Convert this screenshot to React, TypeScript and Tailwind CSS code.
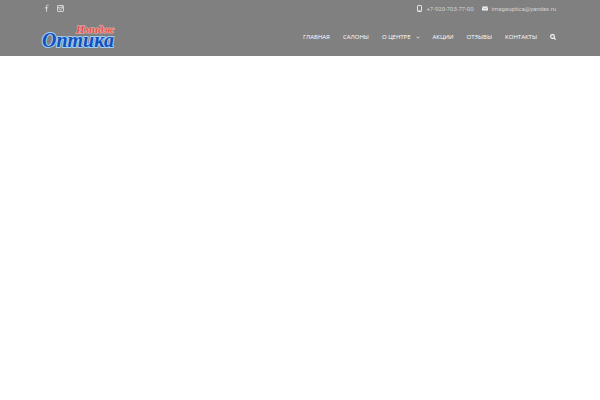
import React from "react";

const links = ["ГЛАВНАЯ", "САЛОНЫ", "О ЦЕНТРЕ", "АКЦИИ", "ОТЗЫВЫ", "КОНТАКТЫ"];

function Logo() {
  return (
    <a href="#" aria-label="Имидж Оптика" className="block">
      <svg width="74" height="28" viewBox="0 0 74 28" className="block overflow-visible">
        <g strokeLinejoin="round" paintOrder="stroke">
          <text x="34" y="11" fill="#e4534e" stroke="#f0b9b7" strokeWidth="1" className="font-['Liberation_Serif',serif] text-[11px] font-bold italic">
            Имидж
          </text>
          <text x="0" y="25" fill="#1450bd" stroke="#a3d0f2" strokeWidth="2" className="font-['Liberation_Serif',serif] text-[20px] font-bold italic">
            Оптика
          </text>
        </g>
      </svg>
    </a>
  );
}

export default function App() {
  return (
    <div className="min-h-screen bg-white font-['Open_Sans',sans-serif]">
      <header className="h-14 bg-[#808080] pr-11 pl-[42px] text-white">
        <div className="flex h-4 items-center justify-between text-[#d2d2d2]">
          <div className="flex items-center gap-2 px-0.5">
            <a href="#" aria-label="Facebook">
              <svg width="5" height="8" viewBox="0 0 5 8" fill="none" stroke="currentColor">
                <path d="M4.6 1H3.8Q2.5 1 2.5 2.2V7.8M.8 3.8H4.3" />
              </svg>
            </a>
            <a href="#" aria-label="Instagram">
              <svg width="7" height="7" viewBox="0 0 7 7" fill="none" stroke="currentColor">
                <rect x=".5" y=".5" width="6" height="6" rx=".5" />
                <path d="M.5 2.4H2M5 2.4H6.5M4.4 1.4H5.6" />
                <circle cx="3.5" cy="3.6" r="1.4" />
              </svg>
            </a>
          </div>
          <div className="flex items-center gap-2 font-['Roboto',sans-serif] text-[6px]">
            <a href="tel:+79207037700" className="flex items-center gap-1">
              <svg width="5" height="7" viewBox="0 0 5 7" fill="none" stroke="#eee">
                <rect x=".5" y=".5" width="4" height="6" rx=".6" strokeWidth=".9" />
                <path d="M1 5.8H4" strokeWidth=".7" />
              </svg>
              +7-920-703-77-00
            </a>
            <a href="mailto:imageoptica@yandex.ru" className="flex items-center gap-1">
              <svg width="6" height="5" viewBox="0 0 6 5">
                <rect y=".4" width="6" height="4.2" rx=".6" fill="#f2f2f2" />
                <path d="M0 1.4 3 3 6 1.4" fill="none" stroke="#808080" strokeWidth=".5" />
              </svg>
              imageoptica@yandex.ru
            </a>
          </div>
        </div>
        <div className="flex h-10 items-center justify-between">
          <Logo />
          <nav className="flex items-center gap-[13px] pt-0.5 text-[6px]">
            {links.map((label) => (
              <a key={label} href="#" className="flex items-center gap-[5px]">
                {label}
                {label === "О ЦЕНТРЕ" && (
                  <svg width="4" height="3" viewBox="0 0 4 3" fill="none" stroke="currentColor" strokeWidth=".7">
                    <path d="M.5.7 2 2.2 3.5.7" />
                  </svg>
                )}
              </a>
            ))}
            <button type="button" aria-label="Поиск">
              <svg width="6" height="6" viewBox="0 0 6 6" fill="none" stroke="currentColor" strokeWidth="1.1">
                <circle cx="2.5" cy="2.5" r="1.9" />
                <path d="M3.9 3.9 5.6 5.6" />
              </svg>
            </button>
          </nav>
        </div>
      </header>
    </div>
  );
}
